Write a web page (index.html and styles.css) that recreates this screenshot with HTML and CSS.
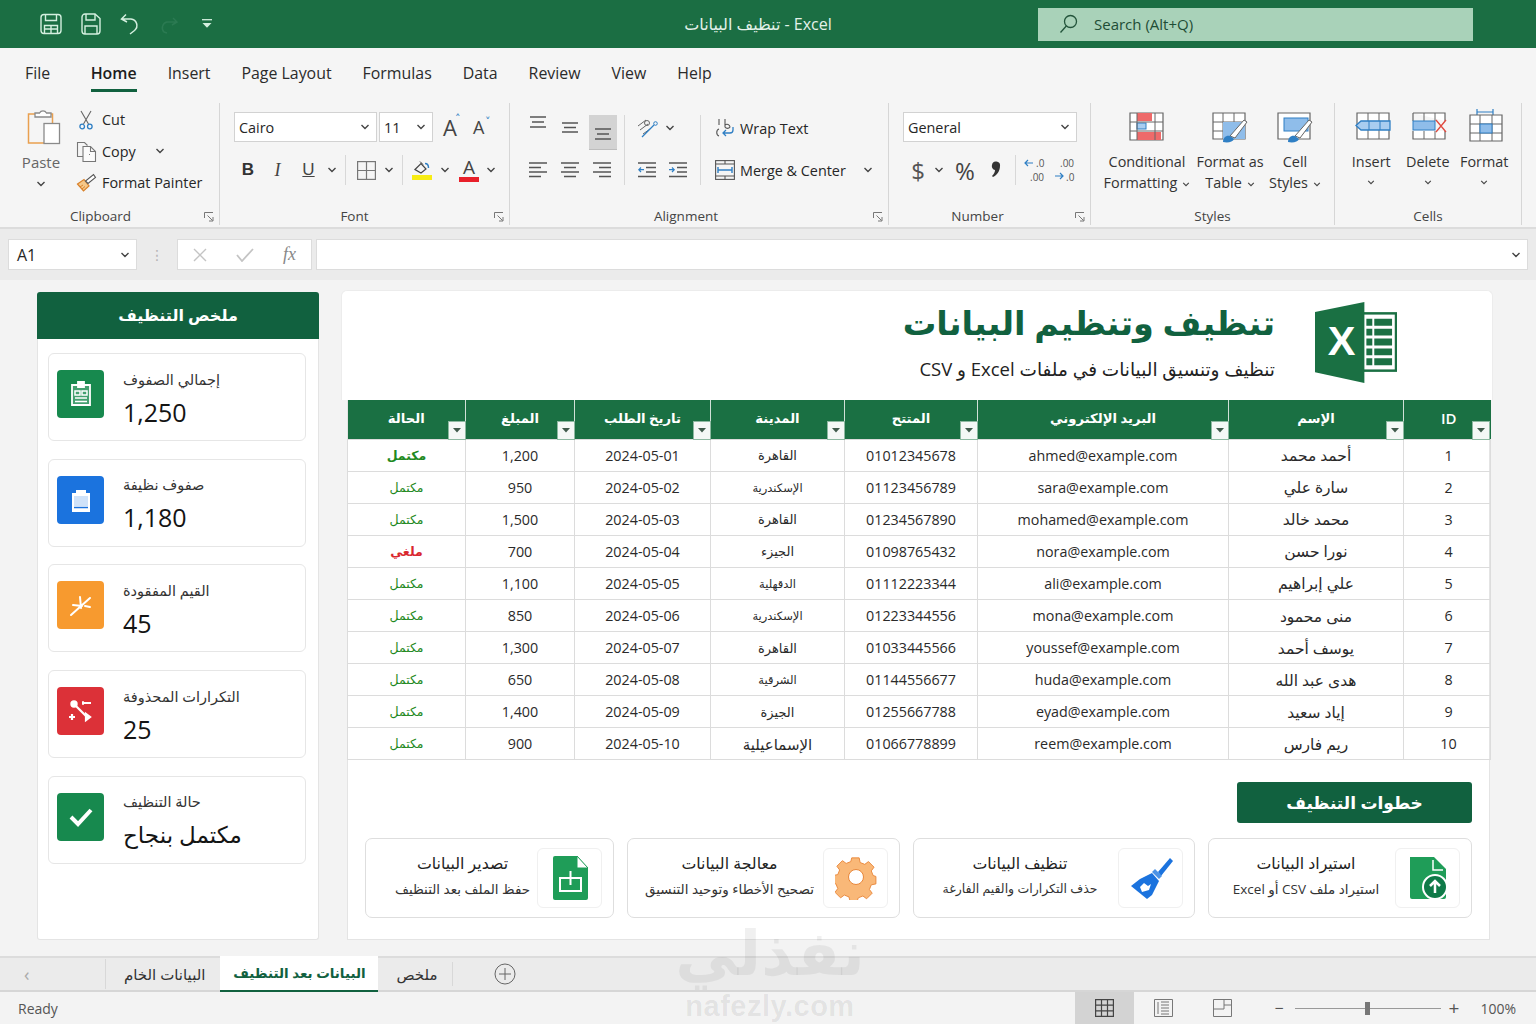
FILE: index.html
```html
<!DOCTYPE html>
<html lang="ar">
<head>
    <meta charset="UTF-8">
    <title>تنظيف البيانات - Excel</title>
    <link rel="stylesheet" href="styles.css">
</head>
<body>
    <svg class="defs" width="0" height="0">
        <symbol id="chev" viewBox="0 0 10 6"><path d="M1.5 1 5 4.5 8.5 1" fill="none" stroke="#444" stroke-width="1.4"/></symbol>
        <symbol id="launch" viewBox="0 0 10 10"><path d="M.5 6V.5H9M3.5 3.5 8.5 8.5M5 9h4V5" fill="none" stroke="#777"/></symbol>
        <symbol id="arrowdown" viewBox="0 0 10 6"><path d="M1 1h8L5 5.5z" fill="#3f5a4b"/></symbol>
    </svg>

    <!-- title bar -->
    <header class="titlebar">
        <div class="qat">
            <svg width="22" height="22" viewBox="0 0 22 22" fill="none" stroke="#d4efdf" stroke-width="1.4"><rect x="1" y="1.5" width="20" height="19" rx="3"/><path d="M5.5 1.5v6h11v-6M4.500 20.500v-8h13v8M11 12.500v8M4.500 16h13"/></svg>
            <svg width="20" height="22" viewBox="0 0 20 22" fill="none" stroke="#d4efdf" stroke-width="1.4"><path d="M1 4a3 3 0 0 1 3-3h10l5 4.500V18a3 3 0 0 1-3 3H4a3 3 0 0 1-3-3z"/><path d="M5 1v6h9V1M4 21v-8h12v8"/></svg>
            <svg width="20" height="22" viewBox="0 0 20 22" fill="none" stroke="#d4efdf" stroke-width="1.5"><path d="M6 1.500 1.500 6 7 9M2 6h9a6.500 6.500 0 0 1 3.500 11.500L10 21"/></svg>
            <svg width="20" height="22" viewBox="0 0 20 22" fill="none" stroke="#2b7a52" stroke-width="1.500"><path d="M14 5 18 9l-5 3M18 9H8a6 6 0 0 0-3 10l3 1"/></svg>
            <svg class="qat-more" width="12" height="10" viewBox="0 0 12 10"><path d="M1 .7h10" stroke="#d4efdf" stroke-width="1.300"/><path d="M1.500 4h9L6 8.800z" fill="#d4efdf"/></svg>
        </div>
        <div class="doc-title">تنظيف البيانات - Excel</div>
        <div class="search">
            <svg width="20" height="20" viewBox="0 0 20 20" fill="none" stroke="#23543b" stroke-width="1.300"><circle cx="11.500" cy="7.500" r="6"/><path d="M7.300 12 1.500 18.500"/></svg>
            <span>Search (Alt+Q)</span>
        </div>
    </header>

    <!-- ribbon tabs -->
    <nav class="menu">
        <a>File</a>
        <a class="current">Home</a>
        <a>Insert</a>
        <a>Page Layout</a>
        <a>Formulas</a>
        <a>Data</a>
        <a>Review</a>
        <a>View</a>
        <a>Help</a>
    </nav>

    <!-- ribbon -->
    <section class="ribbon">
        <div class="group g-clipboard">
            <div class="group-body clip-body">
                <div class="paste">
                    <svg class="paste-ico" width="34" height="38" viewBox="0 0 34 38" fill="none"><path d="M10 6H1.500v29H17" stroke="#e9a04f" stroke-width="1.500"/><path d="M22 6h3.500v9" stroke="#e9a04f" stroke-width="1.500"/><path d="M8 9V5h4.500a4 4 0 0 1 7 0H24v4z" fill="#fff" stroke="#8a8a8a" stroke-width="1.300"/><rect x="17" y="15.500" width="15.500" height="20" fill="#fff" stroke="#8a8a8a" stroke-width="1.300"/></svg>
                    <span class="paste-label">Paste</span>
                    <svg class="chev"><use href="#chev"/></svg>
                </div>
                <div class="clip-tools">
                    <div class="clip-row">
                        <span class="clip-ico"><svg width="14" height="20" viewBox="0 0 14 20" fill="none"><path d="M2 1l7.500 13M12 1 4.500 14" stroke="#666" stroke-width="1.100"/><circle cx="3.200" cy="16.500" r="2.300" stroke="#2f7fc4" stroke-width="1.300"/><circle cx="10.800" cy="16.500" r="2.300" stroke="#2f7fc4" stroke-width="1.300"/></svg></span>
                        <span>Cut</span>
                    </div>
                    <div class="clip-row">
                        <span class="clip-ico"><svg width="21" height="21" viewBox="0 0 21 21" fill="none" stroke="#777" stroke-width="1.100"><path d="M7 15.500H1.500v-14h7l3 3"/><path d="M7 5.500h7.500l5 5v10H7z" fill="#fbfbfb"/><path d="M14.500 5.500v5h5"/><path d="M13 13.500h1"/></svg></span>
                        <span>Copy</span>
                        <svg class="chev copy-chev"><use href="#chev"/></svg>
                    </div>
                    <div class="clip-row">
                        <span class="clip-ico"><svg width="21" height="20" viewBox="0 0 21 20" fill="none"><path d="M1.500 11 8 6.500l5 6.500-5.500 5z" fill="#f6c889" stroke="#d9822b" stroke-width="1.200"/><path d="M4 14l3-2M6 16l3-2.500" stroke="#d9822b"/><path d="M9.500 8 12 10.500l7.500-6-2-3z" fill="#fff" stroke="#555" stroke-width="1.100"/></svg></span>
                        <span>Format Painter</span>
                    </div>
                </div>
            </div>
            <div class="group-label">Clipboard</div>
            <svg class="launcher"><use href="#launch"/></svg>
        </div>

        <div class="group g-font">
            <div class="group-body font-body">
                <div class="font-row">
                    <div class="drop drop-font">Cairo<svg class="chev"><use href="#chev"/></svg></div>
                    <div class="drop drop-size">11<svg class="chev"><use href="#chev"/></svg></div>
                    <span class="grow-a">A<sup>˄</sup></span>
                    <span class="shrink-a">A<sup>˅</sup></span>
                </div>
                <div class="tool-row">
                    <span class="t t-b">B</span>
                    <span class="t t-i">I</span>
                    <span class="t t-u">U</span>
                    <svg class="chev chev-u"><use href="#chev"/></svg>
                    <i class="vsep sep-a"></i>
                    <svg class="ico-borders" width="19" height="19" viewBox="0 0 19 19" fill="none" stroke="#777" stroke-width="1.200"><rect x=".6" y=".6" width="17.800" height="17.800"/><path d="M9.500 1v17M1 9.500h17"/></svg>
                    <svg class="chev chev-b"><use href="#chev"/></svg>
                    <i class="vsep sep-b"></i>
                    <svg class="ico-fill" width="22" height="22" viewBox="0 0 22 22" fill="none"><path d="M4 10.500 10 4.500l5 5.500-5 4z" stroke="#444" stroke-width="1.200"/><path d="M9 2.500l3 3" stroke="#444"/><path d="M14 4.500c3 0 3.500 2 3.500 4.500" stroke="#2f7fc4" stroke-width="1.500"/><rect x="1" y="16" width="20" height="5" fill="#f7ec13"/></svg>
                    <svg class="chev chev-c"><use href="#chev"/></svg>
                    <span class="ico-color">A</span>
                    <svg class="chev chev-d"><use href="#chev"/></svg>
                </div>
            </div>
            <div class="group-label">Font</div>
            <svg class="launcher"><use href="#launch"/></svg>
        </div>

        <div class="group g-align">
            <div class="group-body align-body">
                <div class="align-grid">
                    <span class="cell"><svg class="v-top" width="18" height="14" viewBox="0 0 18 14" stroke="#555" stroke-width="1.300"><path d="M1 1h16M3 6h12M1 11h16"/></svg></span>
                    <span class="cell"><svg class="v-mid" width="18" height="14" viewBox="0 0 18 14" stroke="#555" stroke-width="1.300"><path d="M1 2h16M3 6.500h12M1 11h16"/></svg></span>
                    <span class="cell active"><svg width="18" height="14" viewBox="0 0 18 14" stroke="#555" stroke-width="1.300"><path d="M1 3h16M3 8h12M1 13h16"/></svg></span>
                    <span class="cell"><svg width="18" height="16" viewBox="0 0 18 16" stroke="#555" stroke-width="1.300"><path d="M0 1h18M0 5.500h12M0 10h18M0 14.500h12"/></svg></span>
                    <span class="cell"><svg width="18" height="16" viewBox="0 0 18 16" stroke="#555" stroke-width="1.300"><path d="M0 1h18M3 5.500h12M0 10h18M3 14.500h12"/></svg></span>
                    <span class="cell"><svg width="18" height="16" viewBox="0 0 18 16" stroke="#555" stroke-width="1.300"><path d="M0 1h18M6 5.500h12M0 10h18M6 14.500h12"/></svg></span>
                </div>
                <i class="vsep sep-tall"></i>
                <div class="indent-col">
                    <div class="indent-top">
                        <svg width="22" height="20" viewBox="0 0 22 20" fill="none"><path d="M1 8l8-6M3 12l8-6M6 16l7-5" stroke="#666"/><circle cx="10" cy="5" r="2.500" stroke="#666"/><path d="M5 19 17 7" stroke="#2f7fc4" stroke-width="1.300"/><circle cx="18.500" cy="5.500" r="1.800" stroke="#2f7fc4"/></svg>
                        <svg class="chev"><use href="#chev"/></svg>
                    </div>
                    <div class="indent-bottom">
                        <span class="cell"><svg width="18" height="16" viewBox="0 0 18 16" fill="none"><path d="M0 1h18M8 5.500h10M8 10h10M0 14.500h18" stroke="#555" stroke-width="1.300"/><path d="M6 7.700H1M3 5.500 .8 7.700 3 10" stroke="#2f7fc4" stroke-width="1.200"/></svg></span>
                        <span class="cell"><svg width="18" height="16" viewBox="0 0 18 16" fill="none"><path d="M0 1h18M8 5.500h10M8 10h10M0 14.500h18" stroke="#555" stroke-width="1.300"/><path d="M0 7.700h5M3 5.500l2.200 2.200L3 10" stroke="#2f7fc4" stroke-width="1.200"/></svg></span>
                    </div>
                </div>
                <i class="vsep sep-tall"></i>
                <div class="wrap-col">
                    <div class="wrap-row">
                        <svg width="20" height="20" viewBox="0 0 20 20" fill="none"><path d="M4 1v6M4 11c-3 1-3 6 0 7M10 1v8a3 3 0 0 0 5 0 3 3 0 0 0-5-2" stroke="#555" stroke-width="1.100"/><path d="M18 9v3a3 3 0 0 1-3 3H8M11 12l-3 3 3 3" stroke="#2f7fc4" stroke-width="1.300"/></svg>
                        <span>Wrap Text</span>
                    </div>
                    <div class="wrap-row">
                        <svg width="20" height="20" viewBox="0 0 20 20" fill="none" stroke="#555" stroke-width="1.100"><rect x=".6" y=".6" width="18.800" height="18.800"/><path d="M10 .6v3.400M10 16v3.400M.6 4h18.800M.6 16h18.800"/><path d="M3 10h14M3 7v6M17 7v6" stroke="#2f7fc4" stroke-width="1.400"/></svg>
                        <span>Merge &amp; Center</span>
                        <svg class="chev merge-chev"><use href="#chev"/></svg>
                    </div>
                </div>
            </div>
            <div class="group-label">Alignment</div>
            <svg class="launcher"><use href="#launch"/></svg>
        </div>

        <div class="group g-number">
            <div class="group-body number-body">
                <div class="drop drop-general">General<svg class="chev"><use href="#chev"/></svg></div>
                <div class="tool-row num-row">
                    <span class="t-dollar">$</span>
                    <svg class="chev"><use href="#chev"/></svg>
                    <span class="t-pct">%</span>
                    <svg class="t-comma" width="11" height="18" viewBox="0 0 11 18"><path d="M1 4a4 4 0 1 1 8 1c0 5-3 9-7 11l-1-1c2-2 3-4 3-6a4 4 0 0 1-3-5z" fill="#333"/></svg>
                    <i class="vsep sep-num"></i>
                    <svg class="ico-dec" width="24" height="28" viewBox="0 0 24 28"><path d="M9 7H1M4 4 1 7l3 3" fill="none" stroke="#2f7fc4" stroke-width="1.200"/><text x="12" y="11" class="dec-txt">.0</text><text x="6" y="25" class="dec-txt">.00</text></svg>
                    <svg class="ico-inc" width="24" height="28" viewBox="0 0 24 28"><text x="6" y="11" class="dec-txt">.00</text><path d="M1 20h8M6 17l3 3-3 3" fill="none" stroke="#2f7fc4" stroke-width="1.200"/><text x="12" y="25" class="dec-txt">.0</text></svg>
                </div>
            </div>
            <div class="group-label">Number</div>
            <svg class="launcher"><use href="#launch"/></svg>
        </div>

        <div class="group g-styles">
            <div class="group-body big-body">
                <div class="big w-cond">
                    <svg class="i30" width="36" height="30" viewBox="0 0 36 30" fill="none"><path d="M1 1h33v27H1z" fill="#fff" stroke="#666" stroke-width="1.200"/><rect x="8" y="1" width="15" height="8" fill="#ee6a6a"/><rect x="8" y="20" width="24" height="8" fill="#ee6a6a"/><rect x="8" y="11" width="9" height="6" fill="#a9cdf0" stroke="#2f7fc4"/><path d="M1 10h33M1 19h33M8 1v27M26 1v27" stroke="#666"/></svg>
                    <span>Conditional</span>
                    <span>Formatting<svg class="chev chev-in"><use href="#chev"/></svg></span>
                </div>
                <div class="big w-table">
                    <svg class="i32" width="36" height="32" viewBox="0 0 36 32" fill="none"><path d="M1 1h32v26H1z" fill="#fff" stroke="#666" stroke-width="1.200"/><path d="M1 10h32M1 19h32M11 1v26M22 1v26" stroke="#666"/><rect x="11" y="10" width="22" height="17" fill="#8fbdea"/><path d="M18 24 32 8l3 2-12 16z" fill="#fff" stroke="#666"/><path d="M11 30c0-4 3-7 7-6l4 3c-1 3-6 4-11 3z" fill="#2f7fc4"/></svg>
                    <span>Format as</span>
                    <span>Table<svg class="chev chev-in"><use href="#chev"/></svg></span>
                </div>
                <div class="big w-cell">
                    <svg class="i32" width="36" height="32" viewBox="0 0 36 32" fill="none"><path d="M1 1h32v26H1z" fill="#fff" stroke="#666" stroke-width="1.200"/><rect x="7" y="6" width="24" height="13" fill="#8fbdea" stroke="#2f7fc4"/><path d="M18 24 32 8l3 2-12 16z" fill="#fff" stroke="#666"/><path d="M11 30c0-4 3-7 7-6l4 3c-1 3-6 4-11 3z" fill="#2f7fc4"/></svg>
                    <span>Cell</span>
                    <span>Styles<svg class="chev chev-in"><use href="#chev"/></svg></span>
                </div>
            </div>
            <div class="group-label">Styles</div>
        </div>

        <div class="group g-cells">
            <div class="group-body big-body">
                <div class="big w-c">
                    <svg class="i30" width="36" height="30" viewBox="0 0 36 30" fill="none"><path d="M2 1h32v26H2z" fill="#fff" stroke="#666" stroke-width="1.200"/><path d="M13 1v26M24 1v26" stroke="#666"/><path d="M6 9h29v9H6L1 13.500z" fill="#a9cdf0" stroke="#2f7fc4" stroke-width="1.300"/><path d="M14 9v9M25 9v9" stroke="#2f7fc4"/></svg>
                    <span>Insert</span>
                    <svg class="chev chev-big"><use href="#chev"/></svg>
                </div>
                <div class="big w-c">
                    <svg class="i30" width="36" height="30" viewBox="0 0 36 30" fill="none"><path d="M2 1h32v8M2 1v8M2 19v8h32v-8" fill="#fff" stroke="#666" stroke-width="1.200"/><path d="M13 1v8M24 1v8M13 19v8M24 19v8" stroke="#666"/><rect x="2" y="9" width="22" height="9" fill="#8fbdea" stroke="#2f7fc4"/><path d="M25 8l10 12M35 8 25 20" stroke="#e0483e" stroke-width="1.300"/></svg>
                    <span>Delete</span>
                    <svg class="chev chev-big"><use href="#chev"/></svg>
                </div>
                <div class="big w-c">
                    <svg class="i34" width="36" height="34" viewBox="0 0 36 34" fill="none"><path d="M9 1v6M25 1v6M9 4h16" stroke="#2f7fc4" stroke-width="1.200"/><path d="M2 7h32v26H2z" fill="#fff" stroke="#666" stroke-width="1.200"/><path d="M2 16h32M2 25h32M12 7v26M24 7v26" stroke="#666"/><rect x="12" y="16" width="12" height="9" fill="#8fbdea" stroke="#2f7fc4"/></svg>
                    <span>Format</span>
                    <svg class="chev chev-big"><use href="#chev"/></svg>
                </div>
            </div>
            <div class="group-label">Cells</div>
        </div>
    </section>

    <!-- formula bar -->
    <section class="formula">
        <div class="namebox">A1<svg class="chev"><use href="#chev"/></svg></div>
        <span class="fdots">⋮</span>
        <div class="fbtns">
            <svg width="14" height="14" viewBox="0 0 14 14" stroke="#c4c4c4" stroke-width="1.400"><path d="M1 1l12 12M13 1 1 13"/></svg>
            <svg width="18" height="14" viewBox="0 0 18 14" fill="none" stroke="#c4c4c4" stroke-width="1.800"><path d="M1 7l5 6L17 1"/></svg>
            <span class="fx">fx</span>
        </div>
        <div class="finput"><svg class="chev"><use href="#chev"/></svg></div>
    </section>

    <main class="sheet">
        <aside class="side">
            <h2 class="side-head">ملخص التنظيف</h2>
            <div class="stat">
                <span class="stat-ico bg-green"><svg width="24" height="26" viewBox="0 0 24 26" fill="none" stroke="#fff" stroke-width="1.800"><path d="M3 4h18v20H3z" fill="#cfe9d9" fill-opacity=".25"/><path d="M9 1h6v5H9z" fill="#fff"/><path d="M6 10h5v4H6zM13 10h5v4h-5zM6 17h12M6 20.500h12" stroke-width="1.500"/></svg></span>
                <div><div class="stat-label">إجمالي الصفوف</div><div class="stat-value">1,250</div></div>
            </div>
            <div class="stat">
                <span class="stat-ico bg-blue"><svg width="22" height="26" viewBox="0 0 22 26"><path d="M2 6h4V3h10v3h4v19H2z" fill="#fff"/><path d="M4 9h14v10H4z" fill="#cfe2f9"/><path d="M4 20.500h14" stroke="#1b73de" stroke-width="1.500"/></svg></span>
                <div><div class="stat-label">صفوف نظيفة</div><div class="stat-value">1,180</div></div>
            </div>
            <div class="stat">
                <span class="stat-ico bg-orange"><svg width="24" height="24" viewBox="0 0 24 24" fill="none" stroke="#fff" stroke-width="2" stroke-linecap="round"><path d="M2 22 21 5M11 4l1 11M4 12l9 1M16 13l5 1"/></svg></span>
                <div><div class="stat-label">القيم المفقودة</div><div class="stat-value">45</div></div>
            </div>
            <div class="stat">
                <span class="stat-ico bg-red"><svg width="26" height="26" viewBox="0 0 26 26" fill="none" stroke="#fff" stroke-width="2.200"><path d="M7 7l13 13"/><circle cx="6" cy="6" r="2.600" fill="#fff"/><path d="M18 22l4-3-4-3z" fill="#fff"/><path d="M14 5h9M1 19h6M4 16v6"/><path d="M15 3v4" stroke-width="1.500"/></svg></span>
                <div><div class="stat-label">التكرارات المحذوفة</div><div class="stat-value">25</div></div>
            </div>
            <div class="stat">
                <span class="stat-ico bg-green"><svg width="24" height="20" viewBox="0 0 24 20" fill="none" stroke="#fff" stroke-width="4"><path d="M2 10l7 7L22 3"/></svg></span>
                <div><div class="stat-label">حالة التنظيف</div><div class="stat-value stat-ar">مكتمل بنجاح</div></div>
            </div>
        </aside>

        <div class="content">
            <section class="hero">
                <div class="hero-text">
                    <h1>تنظيف وتنظيم البيانات</h1>
                    <p>تنظيف وتنسيق البيانات في ملفات Excel و CSV</p>
                </div>
                <svg class="logo" width="82" height="81" viewBox="0 0 83 82">
                    <rect x="44" y="11.500" width="38" height="58" fill="#fff" stroke="#1a7043" stroke-width="2.500"/>
                    <path d="M0 10 50 0v82L0 71z" fill="#1a7043"/>
                    <path d="M52 17h6v7h-6zM60 17h18v7H60zM52 27h6v7h-6zM60 27h18v7H60zM52 37h6v7h-6zM60 37h18v7H60zM52 47h6v7h-6zM60 47h18v7H60zM52 57h6v7h-6zM60 57h18v7H60z" fill="#1a7043"/>
                    <text x="13" y="54" class="logo-x">X</text>
                </svg>
            </section>

            <section class="board">
                <table class="data" dir="rtl">
                    <colgroup>
                        <col class="c-id"><col class="c-name"><col class="c-mail"><col class="c-phone"><col class="c-city"><col class="c-date"><col class="c-amount"><col class="c-state">
                    </colgroup>
                    <thead>
                        <tr>
                            <th>ID<span class="filter"><svg><use href="#arrowdown"/></svg></span></th>
                            <th>الإسم<span class="filter"><svg><use href="#arrowdown"/></svg></span></th>
                            <th>البريد الإلكتروني<span class="filter"><svg><use href="#arrowdown"/></svg></span></th>
                            <th>المتتح<span class="filter"><svg><use href="#arrowdown"/></svg></span></th>
                            <th>المدينة<span class="filter"><svg><use href="#arrowdown"/></svg></span></th>
                            <th>تاريخ الطلب<span class="filter"><svg><use href="#arrowdown"/></svg></span></th>
                            <th>المبلغ<span class="filter"><svg><use href="#arrowdown"/></svg></span></th>
                            <th>الحالة<span class="filter"><svg><use href="#arrowdown"/></svg></span></th>
                        </tr>
                    </thead>
                    <tbody>
                        <tr><td>1</td><td class="ar">أحمد محمد</td><td>ahmed@example.com</td><td>01012345678</td><td class="city">القاهرة</td><td>2024-05-01</td><td>1,200</td><td class="ok first">مكتمل</td></tr>
                        <tr><td>2</td><td class="ar">سارة علي</td><td>sara@example.com</td><td>01123456789</td><td class="city tiny">الإسكندرية</td><td>2024-05-02</td><td>950</td><td class="ok">مكتمل</td></tr>
                        <tr><td>3</td><td class="ar">محمد خالد</td><td>mohamed@example.com</td><td>01234567890</td><td class="city">القاهرة</td><td>2024-05-03</td><td>1,500</td><td class="ok">مكتمل</td></tr>
                        <tr><td>4</td><td class="ar">نورا حسن</td><td>nora@example.com</td><td>01098765432</td><td class="city">الجيزء</td><td>2024-05-04</td><td>700</td><td class="no">ملغي</td></tr>
                        <tr><td>5</td><td class="ar">علي إبراهيم</td><td>ali@example.com</td><td>01112223344</td><td class="city tiny">الدقهلية</td><td>2024-05-05</td><td>1,100</td><td class="ok">مكتمل</td></tr>
                        <tr><td>6</td><td class="ar">منى محمود</td><td>mona@example.com</td><td>01223344556</td><td class="city tiny">الإسكندرية</td><td>2024-05-06</td><td>850</td><td class="ok">مكتمل</td></tr>
                        <tr><td>7</td><td class="ar">يوسف أحمد</td><td>youssef@example.com</td><td>01033445566</td><td class="city">القاهرة</td><td>2024-05-07</td><td>1,300</td><td class="ok">مكتمل</td></tr>
                        <tr><td>8</td><td class="ar">هدى عبد الله</td><td>huda@example.com</td><td>01144556677</td><td class="city tiny">الشرقية</td><td>2024-05-08</td><td>650</td><td class="ok">مكتمل</td></tr>
                        <tr><td>9</td><td class="ar">إياد سعيد</td><td>eyad@example.com</td><td>01255667788</td><td class="city">الجيزة</td><td>2024-05-09</td><td>1,400</td><td class="ok">مكتمل</td></tr>
                        <tr><td>10</td><td class="ar">ريم فارس</td><td>reem@example.com</td><td>01066778899</td><td class="city wide">الإسماعيلية</td><td>2024-05-10</td><td>900</td><td class="ok">مكتمل</td></tr>
                    </tbody>
                </table>

                <div class="steps-head"><h2>خطوات التنظيف</h2></div>

                <div class="steps" dir="rtl">
                    <div class="step">
                        <span class="step-ico"><svg width="46" height="46" viewBox="0 0 46 46"><path d="M5 2h24l12 12v28a2 2 0 0 1-2 2H7a2 2 0 0 1-2-2z" fill="#1f9d58"/><path d="M28 5v10h10" fill="none" stroke="#fff" stroke-width="1.500"/><circle cx="30" cy="32" r="12" fill="#0f7a48" stroke="#fff" stroke-width="2"/><path d="M30 38V26M25 31l5-5 5 5" fill="none" stroke="#fff" stroke-width="2.500"/></svg></span>
                        <div class="step-text"><strong>استيراد البيانات</strong><small>استيراد ملف CSV أو Excel</small></div>
                    </div>
                    <div class="step">
                        <span class="step-ico"><svg width="46" height="46" viewBox="0 0 46 46"><path d="M30 17 42 3l3 3-12 15z" fill="#1b73de"/><path d="M27 14l7 7-3 3-7-7z" fill="#4c93e6"/><path d="M12 24l12-6 7 8-7 14-5 4L3 31z" fill="#1b73de"/><path d="M12 32l4-4 4 3 3-2-2 6-7 2z" fill="#fff"/></svg></span>
                        <div class="step-text"><strong>تنظيف البيانات</strong><small class="sub-narrow">حذف التكرارات والقيم الفارغة</small></div>
                    </div>
                    <div class="step">
                        <span class="step-ico"><svg width="42" height="44" viewBox="0 0 42 44"><path d="M17 2h8l1 5 5 2 4-3 6 6-3 4 2 5 3 1v8l-5 1-2 5 3 4-6 6-4-3-5 2-1 3h-8l-1-4-5-2-4 3-6-6 3-4-2-5-3-1v-8l5-1 2-5-3-4 6-6 4 3 5-2z" transform="scale(.93) translate(1 0)" fill="#f9b878" stroke="#e8873a"/><circle cx="21" cy="21" r="7.500" fill="#fff" stroke="#e8873a"/></svg></span>
                        <div class="step-text"><strong>معالجة البيانات</strong><small>تصحيح الأخطاء وتوحيد التنسيق</small></div>
                    </div>
                    <div class="step step-last">
                        <span class="step-ico"><svg width="36" height="46" viewBox="0 0 36 46"><path d="M3 1h22l11 12v30a2 2 0 0 1-2 2H3a2 2 0 0 1-2-2V3a2 2 0 0 1 2-2z" fill="#1f9d58"/><path d="M25 1v12h11z" fill="#fff" stroke="#1f9d58"/><rect x="8" y="23" width="21" height="13" fill="none" stroke="#fff" stroke-width="2"/><path d="M18.500 16v14M13 23h11" fill="none" stroke="#fff" stroke-width="2"/></svg></span>
                        <div class="step-text"><strong>تصدير البيانات</strong><small>حفظ الملف بعد التنظيف</small></div>
                    </div>
                </div>
            </section>
        </div>
    </main>

    <!-- sheet tabs -->
    <footer class="tabs">
        <span class="tab-prev">‹</span>
        <i class="vsep tab-sep1"></i>
        <a class="tab">البيانات الخام</a>
        <a class="tab tab-on">البيانات بعد التنظيف</a>
        <a class="tab tab-plain">ملخص</a>
        <i class="vsep tab-sep2"></i>
        <svg class="add-sheet" width="22" height="22" viewBox="0 0 22 22" fill="none" stroke="#666"><circle cx="11" cy="11" r="10"/><path d="M11 5v12M5 11h12"/></svg>
    </footer>

    <div class="statusbar">
        <span>Ready</span>
        <div class="status-right">
            <span class="view view-on"><svg width="19" height="18" viewBox="0 0 19 18" fill="none" stroke="#444" stroke-width="1.200"><path d="M.6.600h17.800v16.800H.6zM.6 6.200h17.800M.6 11.800h17.800M6.500.6v16.800M12.500.6v16.800"/></svg></span>
            <span class="view"><svg width="19" height="18" viewBox="0 0 19 18" fill="none" stroke="#777"><path d="M.5.500h18v17H.5zM4 3v12M7 3h8M7 6h8M7 9h8M7 12h8M7 15h8"/></svg></span>
            <span class="view"><svg width="19" height="18" viewBox="0 0 19 18" fill="none" stroke="#777"><path d="M.5.500h18v17H.5zM.5 10H11V.5M11 6h7.500"/></svg></span>
            <span class="zoom-minus">−</span>
            <span class="zoom-track"><b class="zoom-thumb"></b></span>
            <span class="zoom-plus">+</span>
            <span class="zoom-val">100%</span>
        </div>
    </div>

    <div class="mark">
        <div class="mark-ar">نفذلي</div>
        <div class="mark-en">nafezly.com</div>
    </div>
</body>
</html>
```

FILE: styles.css
```css
* {
    margin: 0;
    padding: 0;
    box-sizing: border-box;
}

body {
    width: 1536px;
    height: 1024px;
    overflow: hidden;
    display: flex;
    flex-direction: column;
    background: #f3f3f3;
    color: #262626;
    font-family: "Open Sans", "DejaVu Sans", sans-serif;
    font-size: 14.400px;
    position: relative;
}

.defs {
    position: absolute;
}

svg {
    display: block;
    flex: none;
}

.chev {
    width: 10px;
    height: 6px;
}

/* title bar */
.titlebar {
    height: 48px;
    flex: none;
    background: #1b6e43;
    display: flex;
    align-items: center;
    position: relative;
}

.qat {
    display: flex;
    align-items: center;
    gap: 19px;
    padding-left: 40px;
    width: 480px;
}

.qat-more {
    margin-left: 3px;
}

.doc-title {
    width: 556px;
    text-align: center;
    color: #e4f2ea;
    font-size: 16px;
}

.search {
    width: 435px;
    height: 33px;
    margin-left: 2px;
    background: #a9d2b9;
    display: flex;
    align-items: center;
    gap: 15px;
    padding-left: 21px;
    color: #1f4d36;
    font-size: 15px;
}

/* ribbon tabs */
.menu {
    height: 50px;
    flex: none;
    display: flex;
    background: #f5f5f5;
    padding-left: 25px;
    gap: 31px;
    font-size: 15.900px;
    align-items: center;
}

.menu a {
    position: relative;
    color: #2b2b2b;
}

.menu .current {
    font-weight: 600;
    margin-left: 9.500px;
    color: #1d1d1d;
}

.menu .current::after {
    content: "";
    position: absolute;
    left: 0;
    right: 0;
    bottom: -8px;
    height: 3px;
    background: #11613f;
}

/* ribbon */
.ribbon {
    height: 131px;
    flex: none;
    display: flex;
    background: #f5f5f5;
    border-bottom: 2px solid #dcdcdc;
    padding-top: 5px;
}

.group {
    display: flex;
    flex-direction: column;
    height: 122px;
    border-right: 1px solid #d6d6d6;
    position: relative;
}

.group-body {
    flex: 1;
}

.group-label {
    height: 24px;
    padding-top: 6px;
    line-height: 18px;
    font-size: 13.500px;
    text-align: center;
    color: #444;
}

.launcher {
    position: absolute;
    right: 5px;
    bottom: 3px;
    width: 10px;
    height: 10px;
}

.g-clipboard { width: 220px; }
.g-font { width: 290px; }
.g-align { width: 379px; }
.g-number { width: 202px; }
.g-styles { width: 244px; }
.g-cells { width: 187px; }

.g-clipboard .group-label { padding-right: 18px; }
.g-font .group-label { padding-right: 20px; }
.g-align .group-label { padding-right: 26px; }
.g-number .group-label { padding-right: 24px; }

/* clipboard */
.clip-body {
    display: flex;
    padding-left: 14px;
}

.paste {
    width: 54px;
    display: flex;
    flex-direction: column;
    align-items: center;
    padding-top: 5px;
}

.paste-ico {
    margin-left: 6px;
}

.paste-label {
    margin-top: 6px;
    color: #666;
    font-size: 15px;
}

.paste .chev {
    margin-top: 9px;
}

.clip-tools {
    margin-left: 8px;
    padding-top: 1px;
}

.clip-row {
    height: 31.500px;
    display: flex;
    align-items: center;
    gap: 6px;
}

.clip-ico {
    width: 20px;
    display: flex;
    justify-content: center;
}

.copy-chev {
    margin-left: 13px;
}

/* font */
.font-body {
    padding: 9px 0 0 14px;
}

.font-row {
    display: flex;
    align-items: center;
    gap: 2px;
}

.drop {
    height: 30px;
    background: #fff;
    border: 1px solid #d2d2d2;
    display: flex;
    align-items: center;
    justify-content: space-between;
    padding: 0 6px 0 4px;
}

.drop-font { width: 143px; }
.drop-size { width: 54px; }

.grow-a, .shrink-a {
    color: #444;
    position: relative;
}

.grow-a { margin-left: 8px; font-size: 22px; }
.shrink-a { margin-left: 14px; font-size: 18px; }

.grow-a sup, .shrink-a sup {
    position: absolute;
    font-size: 11px;
    top: -2px;
    left: 12px;
    color: #2f7fc4;
}

.tool-row {
    display: flex;
    align-items: center;
    height: 30px;
    margin-top: 13px;
}

.t {
    width: 31px;
    text-align: center;
    font-size: 17px;
    color: #444;
    font-family: "Liberation Sans", sans-serif;
}

.t-b { width: 28px; font-weight: 700; color: #333; }
.t-i { font-style: italic; font-family: "Liberation Serif", serif; font-size: 18px; }
.t-u { text-decoration: underline; }

.chev-u { margin-left: 3px; }

.vsep {
    display: block;
    width: 1px;
    background: #d8d8d8;
    flex: none;
}

.sep-a { height: 30px; margin: 0 11px 0 8px; }
.sep-b { height: 30px; margin: 0 8px; }

.chev-b { margin-left: 8px; }
.chev-c { margin-left: 7px; }
.chev-d { margin-left: 7px; }

.ico-color {
    width: 20px;
    margin-left: 9px;
    text-align: center;
    font-size: 19px;
    line-height: 19px;
    border-bottom: 5px solid #e8202a;
    color: #444;
}

/* alignment */
.align-body {
    display: flex;
    padding: 12px 0 0 12px;
    height: 88px;
}

.align-grid {
    width: 96px;
    display: grid;
    grid-template-columns: repeat(3, 32px);
    grid-template-rows: 35px 30px;
    row-gap: 5px;
}

.cell {
    display: flex;
    align-items: center;
    justify-content: center;
}

.cell.active {
    background: #d3d3d3;
    margin: 0 1px 0 3px;
    box-shadow: inset 0 -1px 0 #bdbdbd;
}

.v-top { margin-bottom: 19px; }
.v-mid { margin-bottom: 10px; }

.sep-tall {
    height: 70px;
    margin: 0 6px;
}

.indent-col {
    width: 63px;
}

.indent-top {
    height: 35px;
    padding: 0 0 10px 6px;
    display: flex;
    align-items: center;
    gap: 6px;
}

.indent-bottom {
    margin-top: 5px;
    height: 30px;
    display: flex;
}

.indent-bottom .cell {
    width: 31px;
}

.wrap-col {
    padding-left: 8px;
}

.wrap-row {
    height: 26px;
    display: flex;
    align-items: center;
    gap: 5px;
}

.wrap-row + .wrap-row {
    margin-top: 14px;
    height: 30px;
}

.merge-chev {
    margin-left: 12px;
}

/* number */
.number-body {
    padding: 9px 0 0 14px;
}

.drop-general { width: 174px; }

.num-row {
    padding-left: 6px;
}

.t-dollar {
    width: 18px;
    font-size: 24px;
    color: #555;
    text-align: center;
}

.num-row .chev { margin-left: 7px; }

.t-pct {
    margin-left: 11px;
    font-size: 24px;
    color: #444;
}

.t-comma { margin-left: 16px; }

.sep-num { height: 30px; margin: 0 8px 0 13px; }

.ico-inc { margin-left: 6px; }

.dec-txt {
    font-size: 10px;
    fill: #555;
    font-family: "Open Sans", sans-serif;
}

/* styles + cells */
.big-body {
    display: flex;
    padding: 4px 0 0 8px;
}

.big {
    display: flex;
    flex-direction: column;
    align-items: center;
    line-height: 21px;
    white-space: nowrap;
    color: #333;
}

.big > .i30 { margin: 5px 0 9px; }
.big > .i32 { margin: 5px 0 7px; }
.big > .i34 { margin: 1px 0 9px; }

.w-cond { width: 96px; }
.w-table { width: 70px; }
.w-cell { width: 60px; }
.w-c { width: 56.500px; }

.w-c > svg:first-child {
    margin-left: 3px;
}

.chev-in {
    display: inline-block;
    width: 8px;
    height: 5px;
    margin-left: 5px;
    vertical-align: middle;
}

.chev-big {
    width: 8px;
    height: 5px;
    margin-top: 8px;
}

/* formula bar */
.formula {
    height: 51px;
    flex: none;
    background: #ebebeb;
    display: flex;
    align-items: center;
    padding: 0 8px;
}

.namebox {
    width: 129px;
    height: 31px;
    background: #fff;
    border: 1px solid #dcdcdc;
    display: flex;
    align-items: center;
    justify-content: space-between;
    padding: 0 6px 0 8px;
    font-size: 16px;
}

.fdots {
    width: 40px;
    text-align: center;
    color: #b5b5b5;
}

.fbtns {
    width: 135px;
    height: 31px;
    background: #fff;
    border: 1px solid #dcdcdc;
    display: flex;
    align-items: center;
    gap: 29px;
    padding-left: 15px;
}

.fx {
    font-family: "Liberation Serif", serif;
    font-style: italic;
    font-size: 18px;
    color: #888;
}

.finput {
    width: 1212px;
    height: 31px;
    margin-left: 4px;
    background: #fff;
    border: 1px solid #dcdcdc;
    display: flex;
    align-items: center;
    justify-content: flex-end;
    padding-right: 6px;
}

/* sheet */
.sheet {
    flex: 1;
    display: flex;
    gap: 22px;
    padding: 10px 0 16px 37px;
    min-height: 0;
}

.side {
    width: 282px;
    margin-top: 2px;
    background: #fff;
    border: 1px solid #e4e4e4;
    border-top: none;
    border-radius: 3px;
}

.side-head {
    height: 47px;
    line-height: 47px;
    text-align: center;
    margin: 0 -1px 14px;
    background: #11613f;
    color: #fff;
    font-size: 16px;
    font-weight: 700;
    border-radius: 3px 3px 0 0;
}

.stat {
    width: 258px;
    height: 88px;
    margin: 0 0 17.700px 10px;
    border: 1px solid #e6e6e6;
    border-radius: 6px;
    display: flex;
    align-items: center;
    gap: 19px;
    padding-left: 8px;
}

.stat-ico {
    width: 47px;
    height: 48px;
    margin-bottom: 6px;
    border-radius: 4px;
    display: flex;
    align-items: center;
    justify-content: center;
}

.bg-green { background: #17894e; }
.bg-blue { background: #1b73de; }
.bg-orange { background: #f79a2f; }
.bg-red { background: #dc3138; }

.stat-label {
    font-size: 14.500px;
    line-height: 20px;
    margin-top: 6px;
    color: #333;
    text-align: left;
}

.stat-value {
    font-size: 25px;
    line-height: 38px;
    color: #141414;
    margin-top: 3px;
}

.stat-ar {
    font-size: 23px;
}

.content {
    width: 1152px;
    display: flex;
    flex-direction: column;
}

.hero {
    height: 110px;
    flex: none;
    background: #fff;
    border-radius: 6px 6px 0 0;
    border: 1px solid #ececec;
    border-bottom: none;
    display: flex;
    justify-content: flex-end;
    padding: 8px 95px 0 0;
    gap: 40px;
}

.logo {
    margin-top: 3px;
}

.hero-text {
    text-align: right;
}

.hero h1 {
    font-size: 33.500px;
    line-height: 46px;
    color: #11613f;
    font-weight: 700;
}

.hero p {
    font-size: 18.500px;
    line-height: 24px;
    margin-top: 12px;
    color: #222;
    direction: rtl;
}

.board {
    flex: 1;
    margin: 0 3px 0 6px;
    background: #fff;
    border: 1px solid #e4e4e4;
    border-top: none;
    padding-right: 17px;
    display: flex;
    flex-direction: column;
}

.data {
    width: 1143px;
    margin-left: -1px;
    border-collapse: collapse;
    table-layout: fixed;
    text-align: center;
    font-size: 14.300px;
    flex: none;
}

.c-id { width: 87px; }
.c-name { width: 175px; }
.c-mail { width: 251px; }
.c-phone { width: 133px; }
.c-city { width: 134px; }
.c-date { width: 136px; }
.c-amount { width: 109px; }
.c-state { width: 118px; }

.data th {
    height: 39px;
    background: #1a7043;
    color: #fff;
    font-size: 13.200px;
    font-weight: 700;
    border-left: 1px solid #cfe0d6;
    position: relative;
    padding-bottom: 2px;
}

.data th:last-child {
    border-left: none;
}

.data th:first-child {
    font-size: 15px;
    font-weight: 600;
}

.data th:first-child, .data td:first-child {
    padding-left: 3px;
}

.filter {
    position: absolute;
    right: -1px;
    bottom: -1px;
    width: 18px;
    height: 19px;
    background: #f4f8f6;
    border: 1px solid #8db9a1;
    display: flex;
    align-items: center;
    justify-content: center;
}

.data th:first-child .filter {
    right: 1px;
}

.filter svg {
    width: 10px;
    height: 6px;
}

.data td {
    height: 32.100px;
    border: 1px solid #dcdcdc;
    color: #2a2a2a;
    white-space: nowrap;
}

.data .ar {
    font-size: 15.500px;
}

.data .city {
    font-size: 13px;
}

.data .tiny {
    font-size: 11.500px;
}

.data .wide {
    font-size: 15px;
}

.data .ok {
    color: #1f8a22;
    font-size: 12.500px;
}

.data .ok.first {
    font-weight: 700;
}

.data .no {
    color: #d9272e;
    font-size: 12.500px;
    font-weight: 700;
}

.steps-head {
    display: flex;
    justify-content: flex-end;
    margin-top: 22px;
}

.steps-head h2 {
    width: 235px;
    height: 41px;
    line-height: 41px;
    border-radius: 3px;
    background: #11613f;
    color: #fff;
    text-align: center;
    font-size: 17px;
}

.steps {
    display: grid;
    grid-template-columns: 264px 282px 273px 249px;
    gap: 13px;
    margin-top: 15px;
}

.step {
    height: 80px;
    border: 1px solid #dedede;
    border-radius: 7px;
    display: flex;
    align-items: center;
    padding-right: 11px;
}

.step-ico {
    width: 65px;
    height: 60px;
    flex: none;
    border: 1px solid #f0f0f0;
    border-radius: 6px;
    display: flex;
    align-items: center;
    justify-content: center;
}

.step-text {
    flex: 1;
    text-align: center;
    padding: 0 0 5px 8px;
    white-space: nowrap;
}

.step-last .step-text {
    padding-left: 22px;
}

.step-text strong {
    display: block;
    font-weight: 400;
    font-size: 15.800px;
    line-height: 22px;
    color: #222;
}

.step-text small {
    display: block;
    margin-top: 5px;
    font-size: 13.500px;
    line-height: 20px;
    color: #333;
}

.step-text .sub-narrow {
    font-size: 12.500px;
}

/* sheet tabs */
.tabs {
    height: 36px;
    flex: none;
    background: #ebebeb;
    border-top: 2px solid #dcdcdc;
    border-bottom: 2px solid #d6d6d6;
    display: flex;
    align-items: center;
    font-size: 15px;
    padding-left: 24px;
    color: #333;
}

.tab-prev {
    width: 81px;
    color: #aaa;
    font-size: 18px;
}

.tab-sep1 { height: 30px; }

.tab {
    padding: 0 15px 0 18px;
    direction: rtl;
}

.tab-on {
    height: 36px;
    margin-top: -1px;
    width: 158px;
    line-height: 34px;
    padding: 0;
    text-align: center;
    background: #fff;
    color: #11613f;
    font-size: 13.500px;
    font-weight: 600;
    border-bottom: 2px solid #11613f;
    white-space: nowrap;
}

.tab-sep2 { height: 24px; }

.add-sheet { margin-left: 41px; }

.statusbar {
    height: 32px;
    flex: none;
    background: #f3f3f3;
    display: flex;
    align-items: center;
    justify-content: space-between;
    padding-left: 18px;
    color: #555;
    font-size: 14px;
}

.status-right {
    display: flex;
    align-items: center;
    height: 100%;
}

.view {
    width: 59px;
    height: 100%;
    display: flex;
    align-items: center;
    justify-content: center;
}

.view-on {
    background: #d3d3d3;
}

.zoom-minus {
    margin-left: 22px;
    font-size: 16px;
}

.zoom-track {
    display: block;
    width: 146px;
    height: 1px;
    margin-left: 11px;
    background: #999;
    position: relative;
}

.zoom-thumb {
    position: absolute;
    left: 70px;
    top: -6px;
    width: 5px;
    height: 13px;
    background: #777;
}

.zoom-plus {
    margin-left: 8px;
    font-size: 19px;
    line-height: 1;
}

.zoom-val {
    margin: 0 20px 0 21px;
    font-size: 14px;
}

/* watermark */
.mark {
    position: absolute;
    left: 640px;
    top: 918px;
    width: 260px;
    text-align: center;
    pointer-events: none;
}

.mark-ar {
    font-family: "DejaVu Sans", sans-serif;
    font-size: 62px;
    line-height: 72px;
    font-weight: 700;
    color: rgba(0, 0, 0, 0.06);
}

.mark-en {
    font-family: "Liberation Sans", sans-serif;
    font-size: 29px;
    line-height: 33px;
    font-weight: 700;
    letter-spacing: 0.5px;
    color: rgba(0, 0, 0, 0.08);
}

.logo-x {
    font-family: "Liberation Sans", sans-serif;
    font-size: 42px;
    font-weight: 700;
    fill: #fff;
}
```
